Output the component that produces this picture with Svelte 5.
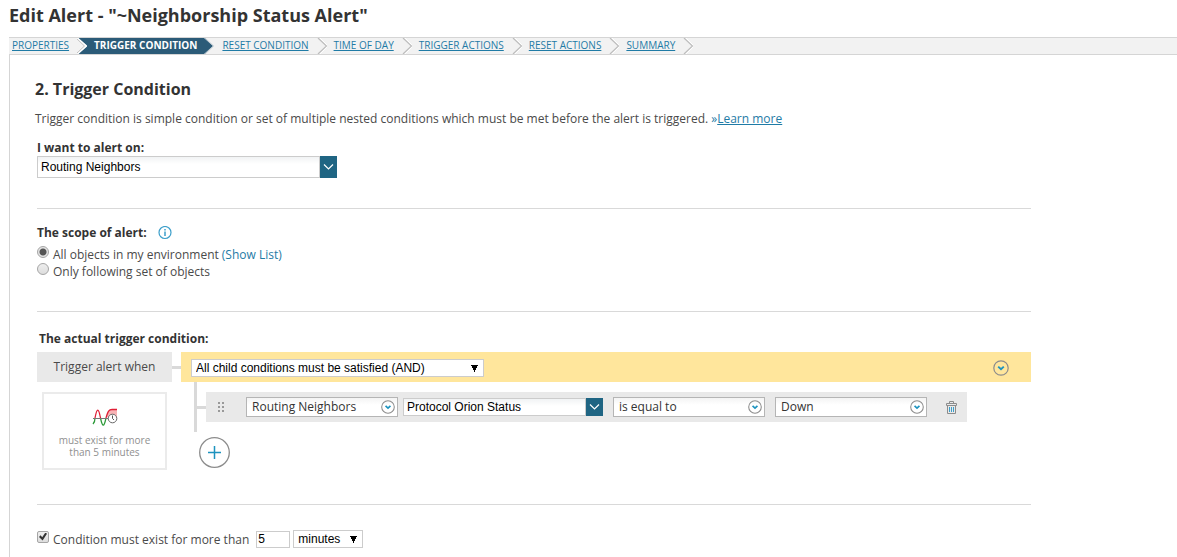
<script lang="ts">
	const steps = [
		'PROPERTIES',
		'TRIGGER CONDITION',
		'RESET CONDITION',
		'TIME OF DAY',
		'TRIGGER ACTIONS',
		'RESET ACTIONS',
		'SUMMARY'
	];
	const activeStep = 1;

	let alertOn = $state('Routing Neighbors');
	let scope = $state('all');
	let operator = $state('and');
	let field = $state('Protocol Orion Status');
	let mustExist = $state(true);
	let duration = $state('5');
	let unit = $state('minutes');
</script>

{#snippet separator(i: number)}
	<svg class="separator" width="10" height="16" viewBox="0 0 10 16" aria-hidden="true">
		{#if i === activeStep}
			<path d="M0 0L9 8L0 16Z" fill="#2b5b78" />
			<path d="M1 0L9.5 8L1 16" fill="none" stroke="#b5c3cc" />
		{:else if i + 1 === activeStep}
			<path d="M1 0H10V16H1L10 8Z" fill="#2b5b78" />
			<path d="M0 0L9 8L0 16" fill="none" stroke="#fff" stroke-width="2" />
			<path d="M-1 0L7.5 8L-1 16" fill="none" stroke="#bdbdbd" />
		{:else}
			<path d="M3 0L11 8L3 16" fill="none" stroke="#fff" />
			<path d="M1 0L9.5 8L1 16" fill="none" stroke="#bdbdbd" stroke-width="1.2" />
		{/if}
	</svg>
{/snippet}

{#snippet roundArrow(size: number)}
	<svg width={size} height={size} viewBox="0 0 16 16" aria-hidden="true">
		<circle cx="8" cy="8" r="7.2" fill="none" stroke="#8c8c8c" stroke-width="1.2" />
		<path d="M5.2 6.6L8 9.2L10.8 6.6" fill="none" stroke="#1d93bf" stroke-width="1.9" />
	</svg>
{/snippet}

{#snippet comboButton(label: string)}
	<button class="combo-btn" aria-label={label}>
		<svg width="11" height="8" viewBox="0 0 11 8" aria-hidden="true">
			<path d="M1 1.5L5.5 6L10 1.5" fill="none" stroke="#fff" stroke-width="1.2" />
		</svg>
	</button>
{/snippet}

<h1>Edit Alert - "~Neighborship Status Alert"</h1>

<nav>
	{#each steps as step, i}
		<a href="#step-{i + 1}" class:active={i === activeStep}>{step}</a>
		{@render separator(i)}
	{/each}
</nav>

<main>
	<h2>2. Trigger Condition</h2>
	<p class="intro">
		Trigger condition is simple condition or set of multiple nested conditions which must be met
		before the alert is triggered. <a href="#learn"><span>»</span>Learn more</a>
	</p>

	<section class="alert-on">
		<label class="title" for="alert-on">I want to alert on:</label>
		<div class="combo">
			<input id="alert-on" type="text" bind:value={alertOn} />
			{@render comboButton('Choose object type')}
		</div>
	</section>

	<section class="scope">
		<h3 class="title">
			The scope of alert:
			<svg width="14" height="14" viewBox="0 0 14 14" aria-hidden="true">
				<circle cx="7" cy="6.5" r="6" fill="none" stroke="#3d9fca" stroke-width="1.2" />
				<path d="M7 5.5V10M7 3V4.5" stroke="#3d9fca" stroke-width="1.5" />
			</svg>
		</h3>
		<div class="option">
			<label><input type="radio" value="all" bind:group={scope} />All objects in my environment</label>
			<a href="#list">(Show List)</a>
		</div>
		<div class="option">
			<label><input type="radio" value="set" bind:group={scope} />Only following set of objects</label>
		</div>
	</section>

	<section class="condition">
		<h3 class="title">The actual trigger condition:</h3>
		<div class="builder">
			<div class="when">
				<div class="when-label">Trigger alert when</div>
				<div class="duration">
					<svg width="26" height="20" viewBox="0 0 26 20" aria-hidden="true">
						<path d="M14 10C16 3 17 1.5 20 1.5H25V9H14Z" fill="#f8b4b6" />
						<path d="M3 10C5 -.5 6.500 -.5 8.5 10M14 10C16 3 17 1.5 20 1.5H25" fill="none" stroke="#e01f36" stroke-width="1.3" />
						<path d="M1 16Q3 14 3 10M8.5 10C10.5 19.5 12 19.5 14 10" fill="none" stroke="#2b9a38" stroke-width="1.3" />
						<path d="M1 10.5H17" stroke="#777" />
						<circle cx="20.5" cy="10.5" r="4.3" fill="#fff" stroke="#666" />
						<path d="M20.5 7.5V10.5L22 12" fill="none" stroke="#555" />
					</svg>
					<span>must exist for more than 5 minutes</span>
				</div>
			</div>
			<div class="link"></div>
			<div class="tree">
				<div class="group-bar">
					<select class="operator" aria-label="Group operator" bind:value={operator}>
						<option value="and">All child conditions must be satisfied (AND)</option>
						<option value="or">At least one child condition must be satisfied (OR)</option>
					</select>
					<button aria-label="Group menu">{@render roundArrow(16)}</button>
				</div>
				<div class="children">
					<div class="trunk"></div>
					<div class="branch"></div>
					<div class="row">
						<svg class="grip" width="8" height="11" viewBox="0 0 8 11" aria-hidden="true">
							{#each [0, 4, 8] as y}
								<rect x="0" {y} width="2" height="2" fill="#999" />
								<rect x="4" {y} width="2" height="2" fill="#999" />
							{/each}
						</svg>
						<button class="picker">Routing Neighbors {@render roundArrow(14)}</button>
						<div class="combo field">
							<input type="text" aria-label="Field" bind:value={field} />
							{@render comboButton('Choose field')}
						</div>
						<button class="picker">is equal to {@render roundArrow(14)}</button>
						<button class="picker">Down {@render roundArrow(14)}</button>
						<button class="trash" aria-label="Delete condition">
							<svg width="12" height="13" viewBox="0 0 12 13" aria-hidden="true">
								<path d="M3.5 2.5V.5H7.5V2.5M.5 4.5V2.5H10.5V4.5ZM1.5 4.5V12.5H9.5V4.5" fill="none" stroke="#8c8c8c" />
								<path d="M3.5 6V11M5.5 6V11M7.5 6V11" stroke="#3d9fca" />
							</svg>
						</button>
					</div>
				</div>
				<button class="add" aria-label="Add condition">
					<svg width="32" height="32" viewBox="0 0 32 32" aria-hidden="true">
						<circle cx="15.5" cy="15.5" r="14.8" fill="none" stroke="#8c8c8c" stroke-width="1.3" />
						<path d="M9 15.5H22M15.5 9V22" stroke="#1d93bf" stroke-width="1.5" />
					</svg>
				</button>
			</div>
		</div>
	</section>

	<section class="exist">
		<label><input type="checkbox" bind:checked={mustExist} />Condition must exist for more than</label>
		<input class="amount" type="text" aria-label="Duration" bind:value={duration} />
		<select class="unit" aria-label="Unit" bind:value={unit}>
			<option>minutes</option>
			<option>hours</option>
		</select>
	</section>
</main>

<style>
	:global(body) {
		background: #fff;
		color: #4a4a4a;
		font: 12px/17px 'Open Sans', sans-serif;
	}
	a {
		color: #1f7ba6;
	}
	button,
	input,
	select {
		box-sizing: border-box;
		margin: 0;
		font-size: 12px;
	}
	button {
		padding: 0;
		border: 0;
		background: none;
		cursor: pointer;
	}
	svg {
		display: block;
		flex: none;
	}
	h1 {
		margin: 0;
		padding: 3px 9px 10px;
		color: #333;
		font-size: 18px;
		line-height: 24px;
		font-weight: 700;
	}
	nav {
		display: flex;
		height: 16px;
		margin-left: 9px;
		border: 1px solid #d5d5d5;
		border-width: 1px 0;
		background: #f2f2f2;
		font-size: 10px;
		line-height: 15px;
		white-space: nowrap;
	}
	nav a {
		padding: 0 8px 0 7px;
	}
	nav a:first-child {
		padding-left: 3px;
	}
	nav a.active {
		padding: 0 7px;
		background: #2b5b78;
		color: #fff;
		font-weight: 700;
		text-decoration: none;
	}
	nav a.active + .separator {
		margin-right: 1px;
	}
	main {
		margin-left: 9px;
		padding: 24px 0 0 25px;
		border-left: 1px solid #d5d5d5;
	}
	h2 {
		margin: 0;
		color: #333;
		font-size: 16px;
		line-height: 20px;
		font-weight: 700;
	}
	.intro {
		margin: 11px 0 12px;
	}
	.intro span {
		display: inline-block;
	}
	section {
		max-width: 994px;
		margin: 0 2px;
		border-bottom: 1px solid #d9d9d9;
	}
	.title {
		display: flex;
		align-items: center;
		gap: 11px;
		margin: 0;
		color: #333;
		font-size: 12px;
		line-height: 17px;
		font-weight: 700;
	}
	.alert-on {
		padding-bottom: 30px;
	}
	.combo {
		display: flex;
		width: 300px;
		height: 22px;
	}
	.combo input {
		flex: 1;
		min-width: 0;
		padding: 0 3px;
		border: 1px solid #ccc;
		background: linear-gradient(#f1f3f4, #fff 7px);
		color: #000;
		font-family: 'Liberation Sans', sans-serif;
	}
	.combo-btn {
		display: flex;
		align-items: center;
		justify-content: center;
		width: 17px;
		background: #1f6583;
	}
	.scope {
		padding: 15px 0 31px;
	}
	.scope .title {
		margin-bottom: 5px;
	}
	.option {
		display: flex;
		gap: 3px;
	}
	.option a {
		text-decoration: none;
	}
	label:not(.title) {
		display: flex;
	}
	input[type='radio'],
	input[type='checkbox'] {
		appearance: none;
		flex: none;
		width: 12px;
		height: 12px;
		margin-right: 4px;
		border: 1px solid #a5a5a5;
		background: linear-gradient(#eee, #ddd);
	}
	input[type='radio'] {
		border-radius: 50%;
	}
	input[type='radio']:checked {
		background: radial-gradient(circle, #555 3px, #e4e4e4 4px);
	}
	input[type='checkbox'] {
		display: grid;
		place-items: center;
		border-radius: 2px;
	}
	input[type='checkbox']:checked::after {
		content: '';
		width: 8px;
		height: 8px;
		background: #333;
		clip-path: polygon(0 55%, 20% 35%, 40% 60%, 80% 0, 100% 15%, 45% 100%);
	}
	.condition {
		padding: 18px 0 34px;
	}
	.condition .title {
		padding-left: 2px;
		margin-bottom: 5px;
	}
	.builder {
		display: flex;
	}
	.when {
		flex: none;
		width: 135px;
	}
	.when-label {
		height: 30px;
		background: #e9e9e9;
		line-height: 30px;
		text-align: center;
	}
	.duration {
		display: flex;
		flex-direction: column;
		align-items: center;
		gap: 6px;
		margin: 10px 5px 0;
		padding: 14px 12px 10px;
		border: 2px solid #ebebeb;
		color: #909090;
		font-size: 10px;
		line-height: 12px;
		text-align: center;
	}
	.link {
		width: 9px;
		height: 3px;
		margin-top: 14px;
		background: #d9d9d9;
	}
	.tree {
		flex: 1;
	}
	.group-bar {
		display: flex;
		box-sizing: border-box;
		align-items: center;
		justify-content: space-between;
		height: 30px;
		padding: 2px 22px 0 10px;
		background: #ffe69c;
	}
	select {
		appearance: none;
		border: 1px solid #ccc;
		border-radius: 0;
		background-color: #fff;
		background-image: conic-gradient(from -27deg at 50% 100%, #000 54deg, transparent 0);
		background-position: right 5px center;
		background-repeat: no-repeat;
		background-size: 7px 7px;
		color: #000;
		font-family: 'Liberation Sans', sans-serif;
	}
	.operator {
		width: 293px;
		height: 18px;
		padding: 0 4px;
	}
	.children {
		display: flex;
		padding-left: 13px;
	}
	.trunk {
		width: 3px;
		height: 50px;
		background: #d9d9d9;
	}
	.branch {
		width: 9px;
		height: 3px;
		margin-top: 24px;
		background: #d9d9d9;
	}
	.row {
		display: flex;
		align-items: center;
		height: 30px;
		margin-top: 10px;
		padding: 0 9px 0 12px;
		background: #e9e9e9;
	}
	.grip {
		margin-right: 20px;
	}
	.picker {
		display: flex;
		align-items: center;
		justify-content: space-between;
		width: 152px;
		height: 20px;
		padding: 0 2px 1px 5px;
		border: 1px solid #b5b5b5;
		background: linear-gradient(#f4f4f4, #fff 7px);
		color: #333;
		font-family: 'Open Sans', sans-serif;
	}
	.picker + .picker {
		margin-left: 10px;
	}
	.field {
		width: 200px;
		height: 18px;
		margin: 0 10px 0 5px;
	}
	.trash {
		margin-left: 19px;
	}
	.add {
		display: block;
		margin: 5px 0 0 18px;
	}
	/* The select's own arrow is replaced, so each select carries a drawn one */
	.exist {
		display: flex;
		align-items: center;
		padding: 25px 0;
		border: 0;
	}
	.amount {
		width: 34px;
		height: 17px;
		margin: 0 3px 0 7px;
		padding: 0 1px;
		border: 1px solid #ccc;
		font-family: 'Liberation Sans', sans-serif;
	}
	.unit {
		width: 70px;
		height: 18px;
		padding: 0 4px;
	}
</style>
